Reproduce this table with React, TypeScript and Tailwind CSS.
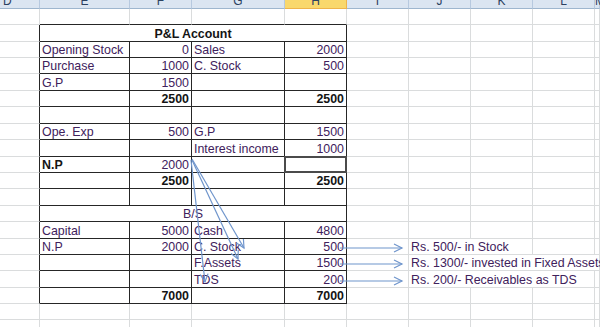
import clsx from "clsx";
import type { ReactNode } from "react";

type V = string | { t: string; b: true };
const B = (t: string): V => ({ t, b: true });

type RowData = {
  h: string;
  title?: V;
  cells?: [V, V, V, V];
  active?: boolean;
  note?: string;
  noteW?: string;
};

const cols = [
  { key: "D", w: "w-[40px]" },
  { key: "E", w: "w-[90px]" },
  { key: "F", w: "w-[62px]" },
  { key: "G", w: "w-[93px]" },
  { key: "H", w: "w-[62px]" },
  { key: "I", w: "w-[62px]" },
  { key: "J", w: "w-[62px]" },
  { key: "K", w: "w-[62px]" },
  { key: "L", w: "w-[62px]" },
  { key: "M", w: "min-w-0 flex-1" },
];

// row 0 is the blank row above the sheet's table, rows 1..17 are the bordered table
const rows: RowData[] = [
  { h: "h-[16px]" },
  { h: "h-[17px]", title: B("P&L Account") },
  { h: "h-[16px]", cells: ["Opening Stock", "0", "Sales", "2000"] },
  { h: "h-[16px]", cells: ["Purchase", "1000", "C. Stock", "500"] },
  { h: "h-[17px]", cells: ["G.P", "1500", "", ""] },
  { h: "h-[16px]", cells: ["", B("2500"), "", B("2500")] },
  { h: "h-[17px]", cells: ["", "", "", ""] },
  { h: "h-[16px]", cells: ["Ope. Exp", "500", "G.P", "1500"] },
  { h: "h-[17px]", cells: ["", "", "Interest income", "1000"] },
  { h: "h-[16px]", cells: [B("N.P"), "2000", "", ""], active: true },
  { h: "h-[16px]", cells: ["", B("2500"), "", B("2500")] },
  { h: "h-[17px]", cells: ["", "", "", ""] },
  { h: "h-[16px]", title: "B/S" },
  { h: "h-[17px]", cells: ["Capital", "5000", "Cash", "4800"] },
  { h: "h-[16px]", cells: ["N.P", "2000", "C. Stock", "500"], note: "Rs. 500/- in Stock", noteW: "w-[124px]" },
  { h: "h-[16px]", cells: ["", "", "F.Assets", "1500"], note: "Rs. 1300/- invested in Fixed Assets", noteW: "min-w-0 flex-1" },
  { h: "h-[17px]", cells: ["", "", "TDS", "200"], note: "Rs. 200/- Receivables as TDS", noteW: "w-[186px]" },
  { h: "h-[16px]", cells: ["", B("7000"), "", B("7000")] },
  { h: "h-[16px]" },
  { h: "h-[17px]" },
];

function Cell({
  w,
  r = false,
  b = false,
  align = "left",
  v,
  extra,
}: {
  w: string;
  r?: boolean;
  b?: boolean;
  align?: "left" | "right" | "center";
  v?: V;
  extra?: ReactNode;
}) {
  const bold = typeof v === "object";
  const text = typeof v === "object" ? v.t : v;
  return (
    <div
      className={clsx(
        "relative flex shrink-0 items-end whitespace-nowrap border-r border-b px-[2px]",
        w,
        r ? "border-r-[#262626]" : "border-r-[#dadcdd]",
        b ? "border-b-[#262626]" : "border-b-[#dadcdd]",
        align === "right" && "justify-end",
        align === "center" && "justify-center",
        bold ? "font-bold text-[#141414]" : "text-[#40215c]"
      )}
    >
      {text && <span className="leading-[14px]">{text}</span>}
      {extra}
    </div>
  );
}

function SheetRow({ row, i }: { row: RowData; i: number }) {
  const inTable = i >= 1 && i <= 17;
  const edge = inTable || i === 0;
  const c = row.cells ?? ["", "", "", ""];

  return (
    <div className={clsx("flex", row.h)}>
      <Cell w="w-[40px]" r={inTable} />
      {row.title !== undefined ? (
        <Cell w="w-[307px]" r b align="center" v={row.title} />
      ) : (
        <>
          <Cell w="w-[90px]" r={inTable} b={edge} v={c[0]} />
          <Cell w="w-[62px]" r={inTable} b={edge} align="right" v={c[1]} />
          <Cell w="w-[93px]" r={inTable} b={edge} v={c[2]} />
          <Cell
            w="w-[62px]"
            r={inTable}
            b={edge}
            align="right"
            v={c[3]}
            extra={
              row.active && (
                <div className="absolute -left-[1px] -top-[1px] h-[17px] w-[63px] border-2 border-[#4b4b4b]" />
              )
            }
          />
        </>
      )}
      <Cell w="w-[62px]" />
      {row.note ? (
        <>
          <Cell w={row.noteW ?? "w-[124px]"} v={row.note} />
          {row.noteW === "w-[124px]" && <Cell w="w-[62px]" />}
          {row.noteW !== "min-w-0 flex-1" && <Cell w="min-w-0 flex-1" />}
        </>
      ) : (
        <>
          <Cell w="w-[62px]" />
          <Cell w="w-[62px]" />
          <Cell w="w-[62px]" />
          <Cell w="min-w-0 flex-1" />
        </>
      )}
    </div>
  );
}

export default function App() {
  return (
    <div className="relative h-[327px] w-[600px] overflow-hidden bg-white font-['Liberation_Sans',Arial,sans-serif] text-[12.4px]">
      {/* column headers, cut off at the top */}
      <div className="flex h-[9px] overflow-hidden">
        {cols.map((col) => (
          <div
            key={col.key}
            className={clsx(
              "shrink-0 border-r border-b text-[12px] leading-[12px] text-[#2b4160]",
              col.w,
              col.key === "D" ? "pl-[3px] text-left" : "text-center",
              col.key === "H"
                ? "border-[#eeb44a] bg-[#f9d86c]"
                : "border-r-[#b7c9df] border-b-[#9eb6ce] bg-[#dbe5f1]"
            )}
          >
            <div className="-mt-[5px]">{col.key}</div>
          </div>
        ))}
      </div>

      {rows.map((row, i) => (
        <SheetRow key={i} row={row} i={i} />
      ))}

      {/* connector arrows drawn on top of the sheet */}
      <svg
        className="pointer-events-none absolute left-0 top-0"
        width="600"
        height="327"
        viewBox="0 0 600 327"
      >
        <defs>
          <marker
            id="ah"
            markerWidth="11"
            markerHeight="11"
            refX="9"
            refY="5"
            orient="auto"
            markerUnits="userSpaceOnUse"
          >
            <path d="M1,1 L9,5 L1,9" fill="none" stroke="#6f95cc" strokeWidth="1.2" />
          </marker>
        </defs>
        <g stroke="#6f95cc" strokeWidth="1.2" fill="none" markerEnd="url(#ah)">
          <line x1="192" y1="159" x2="244" y2="248" />
          <line x1="192" y1="160" x2="238" y2="259" />
          <line x1="191" y1="160" x2="205" y2="282" />
          <line x1="340" y1="248" x2="402" y2="248" />
          <line x1="340" y1="264" x2="402" y2="264" />
          <line x1="340" y1="281" x2="402" y2="281" />
        </g>
      </svg>
    </div>
  );
}
